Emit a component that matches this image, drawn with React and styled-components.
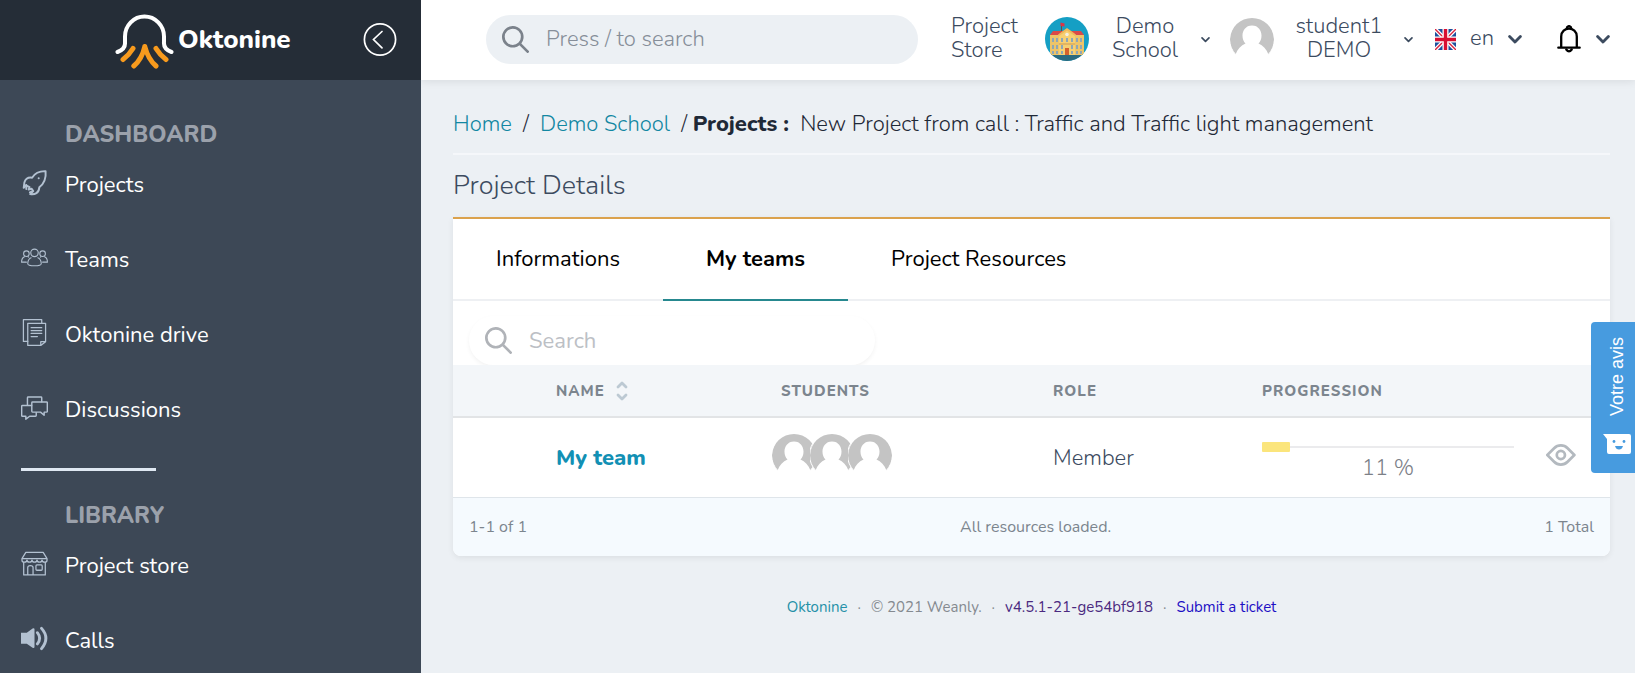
import React from "react";
import styled, { createGlobalStyle } from "styled-components";

const Global = createGlobalStyle`
  *, *::before, *::after { box-sizing: border-box; }
  body {
    margin: 0;
    background: #ecf0f4;
    color: #3c4b5f;
    font-family: Nunito, Lato, "Liberation Sans", sans-serif;
    font-size: 22px;
    line-height: 24px;
  }
  a { text-decoration: none; color: inherit; }
  button, input { font: inherit; color: inherit; border: 0; background: none; padding: 0; }
  button { cursor: pointer; }
  svg { display: block; flex: none; }
`;

const Shell = styled.div`
  display: grid;
  grid-template-columns: 421px minmax(0, 1fr);
  height: 100vh;
`;

/* Sidebar */
const Sidebar = styled.aside`
  background: #3d4856;
  overflow: hidden;
`;
const Brand = styled.div`
  display: flex;
  align-items: center;
  height: 80px;
  padding: 0 24px 0 115px;
  background: #252d37;
`;
const BrandLink = styled.a`
  display: flex;
  align-items: center;
  gap: 4px;
  color: #fff;
  font-size: 26px;
  font-weight: 800;
`;
const Collapse = styled.button`
  margin-left: auto;
`;
const NavSection = styled.nav`
  padding-top: ${(p) => p.$top}px;
`;
const NavTitle = styled.h2`
  margin: 0;
  padding-left: 65px;
  color: #9ba1ab;
  font-size: 23px;
  line-height: 24px;
  font-weight: 800;
  text-transform: uppercase;
`;
const NavLink = styled.a`
  display: flex;
  align-items: center;
  gap: 17px;
  height: 75px;
  padding-left: 21px;
  color: #fff;
  svg { color: #b3c1d1; width: 27px; height: 27px; margin-bottom: 4px; }
`;
const Divider = styled.hr`
  width: 135px;
  height: 3px;
  margin: 21px 0 0 21px;
  border: 0;
  background: #dfe8f2;
`;

/* Top bar */
const Main = styled.div`
  display: flex;
  flex-direction: column;
  min-width: 0;
  overflow-y: auto;
`;
const TopBar = styled.header`
  display: flex;
  align-items: center;
  flex: none;
  height: 80px;
  padding: 0 25px 2px 65px;
  background: #fff;
  box-shadow: 0 2px 8px rgba(0, 0, 0, 0.08);
  font-weight: 300;
`;
const SearchBox = styled.label`
  display: flex;
  align-items: center;
  gap: 17px;
  height: 49px;
  padding: 0 16px;
  border-radius: 25px;
  background: ${(p) => (p.$plain ? "#fff" : "#ecf0f4")};
  color: ${(p) => (p.$plain ? "#b0b3b8" : "#7b828b")};
  box-shadow: ${(p) => (p.$plain ? "0 2px 4px rgba(0, 0, 0, 0.05)" : "none")};
  font-weight: ${(p) => (p.$plain ? 400 : 300)};
  input { flex: 1; min-width: 0; outline: 0; }
  input::placeholder { color: ${(p) => (p.$plain ? "#bcc0c5" : "#868e99")}; opacity: 1; }
`;
const TopSearch = styled(SearchBox)`
  flex: 1;
  margin-right: 33px;
`;
const StoreLink = styled.a`
  width: 68px;
  margin: 0 26px 2px 0;
`;
const Menu = styled.button`
  display: flex;
  align-items: center;
  gap: ${(p) => p.$gap}px;
  margin-right: ${(p) => p.$after || 0}px;
  font-weight: 300;
`;
const MenuLabel = styled.span`
  width: ${(p) => p.$width}px;
  margin-bottom: 3px;
  text-align: center;
`;

/* Content */
const Content = styled.main`
  padding: 32px 25px 24px 32px;
`;
const Crumbs = styled.nav`
  display: flex;
  align-items: center;
  height: 41px;
  padding-bottom: 17px;
  color: #1f2937;
  font-weight: 300;
  white-space: pre;
  a { color: #1287a2; }
  strong { font-weight: 800; }
`;
const Rule = styled.hr`
  height: 2px;
  margin: 0;
  border: 0;
  background: #f5f7fa;
`;
const Title = styled.h1`
  margin: 0;
  padding: 15px 0;
  font-size: 27px;
  line-height: 32px;
  font-weight: 300;
`;
const Card = styled.section`
  background: #fff;
  border-top: 2px solid #dba24d;
  border-radius: 0 0 8px 8px;
  box-shadow: 0 2px 6px rgba(0, 0, 0, 0.07);
`;
const Tabs = styled.div`
  display: flex;
  height: 82px;
  border-bottom: 2px solid #eef0f3;
`;
const Tab = styled.button`
  height: 82px;
  padding: 0 43px;
  color: #000;
  font-weight: ${(p) => (p.$active ? 700 : 400)};
  border-bottom: 2px solid ${(p) => (p.$active ? "#26888f" : "transparent")};
`;
const FilterRow = styled.div`
  padding: 15px 16px 0;
`;
const FilterSearch = styled(SearchBox)`
  max-width: 406px;
`;
const Table = styled.table`
  width: 100%;
  table-layout: fixed;
  border-collapse: collapse;
`;
const Th = styled.th`
  height: 52px;
  padding: 0 16px;
  background: #f3f6f9;
  border-bottom: 2px solid #e2e4e6;
  color: #7c858e;
  font-size: 15px;
  font-weight: 800;
  letter-spacing: 1px;
  text-align: left;
  text-transform: uppercase;
`;
const SortButton = styled.button`
  display: flex;
  align-items: center;
  gap: 11px;
  font-weight: 800;
  letter-spacing: 1px;
  text-transform: uppercase;
`;
const Td = styled.td`
  height: 80px;
  padding: 0 16px;
  font-weight: 300;
`;
const TeamLink = styled.a`
  color: #1290b4;
  font-weight: 800;
`;
const AvatarStack = styled.div`
  display: flex;
  margin: 0 0 6px -9px;
  svg + svg { margin-left: -6px; }
`;
const ProgressCell = styled.div`
  padding-top: 11px;
`;
const Progress = styled.div`
  display: flex;
  align-items: center;
  height: 10px;
  background: linear-gradient(#ebebed, #ebebed) center / 100% 2px no-repeat;
`;
const ProgressFill = styled.div`
  height: 10px;
  border-radius: 1px;
  background: #fbe57c;
`;
const ProgressText = styled.div`
  height: 32px;
  line-height: 32px;
  color: #7c8087;
  text-align: center;
`;
const ViewLink = styled.a`
  display: inline-block;
  color: #b3b9bf;
`;
const Pager = styled.div`
  display: flex;
  align-items: center;
  justify-content: space-between;
  height: 59px;
  padding: 0 16px;
  border-top: 1px solid #dfe5ea;
  border-radius: 0 0 8px 8px;
  background: #f5fafe;
  color: #7c858e;
  font-size: 16px;
`;
const Footer = styled.footer`
  display: flex;
  justify-content: center;
  gap: 10px;
  padding-top: 39px;
  color: #858a90;
  font-size: 15px;
`;
const FooterLink = styled.a`
  color: ${(p) => p.$color};
`;
const Feedback = styled.button`
  position: fixed;
  right: 0;
  top: 322px;
  display: flex;
  flex-direction: column;
  align-items: center;
  gap: 18px;
  width: 44px;
  padding: 15px 0 19px 8px;
  border-radius: 4px 0 0 4px;
  background: #479bdf;
  color: #fff;
  font-family: "Liberation Sans", sans-serif;
  font-size: 18px;
  line-height: 20px;
`;
const FeedbackText = styled.span`
  writing-mode: vertical-rl;
  transform: rotate(180deg);
`;

/* Icons */
const Line = ({ w = 1, children }) => (
  <svg viewBox="0 0 28 28" fill="none" stroke="currentColor" strokeWidth={w} strokeLinecap="round" strokeLinejoin="round" aria-hidden="true">
    {children}
  </svg>
);
const Rocket = () => (
  <Line w={2}>
    <path d="M25.5 2.200C19 2 14.500 4 11.500 9 7.500 8.500 4.500 10.500 3.500 14L2.800 19.500l2.400-2.600 3.700 1.800-1 2.700 3.200-.9 1.600 2.300-3.200 3.200c5 .8 9-1 9.500-7C23.500 15.500 26.300 10.500 25.500 2.200z" />
    <path d="M18.300 9.500h.1M5.500 16.500v4.200M11.500 23.200l-2.300 1" />
  </Line>
);
const Users = () => (
  <Line w={1.100}>
    <circle cx="14" cy="9.200" r="3.900" />
    <circle cx="5.600" cy="10" r="2.900" />
    <circle cx="22.400" cy="10" r="2.900" />
    <path d="M10.500 14.200C8 15.300 7 17.300 7 20.500c0 1.200 3 2.100 7 2.100s7-.9 7-2.100c0-3.200-1-5.200-3.500-6.300" />
    <path d="M3.600 13.200C1.600 14 .6 15.500.6 18.800h5M24.400 13.200c2 .8 3 2.300 3 5.600h-5M8 13.600l-.6-.4M20 13.600l.6-.4" />
  </Line>
);
const Docs = () => (
  <Line w={1.300}>
    <path d="M7 4.500h18.500v19L20.500 27.400H7zM20.500 27.400v-3.900h5" />
    <path d="M21.500 4.300V.7H2.500v22.600H7M10.500 9h11M10.500 12h11M10.500 15h11M10.500 18.200h6.500" />
  </Line>
);
const Chats = () => (
  <Line w={1.500}>
    <path d="M12 8.200h14.500q.8 0 .8.800v9q0 .8-.8.800H24v3.300l-3.800-3.300H12q-.8 0-.8-.8V9q0-.8.800-.8z" />
    <path d="M21.500 8V4q0-.8-.8-.8H7.500q-.8 0-.8.800v8M11 12H1.500q-.8 0-.8.800v9.500q0 .8.800.8H5v3l4-3h6q.8 0 .8-.8v-3" />
  </Line>
);
const Store = () => (
  <Line w={1.300}>
    <path d="M5 2.500h18l4 6.500H1zM1 9v1.500c0 2.800 5 2.800 5.200 0 .2 2.800 5 2.800 5.200 0 .2 2.800 5 2.800 5.200 0 .2 2.800 5 2.800 5.200 0 .2 2.800 5.200 2.800 5.200 0V9M2.800 13v12.800h22.400V13M7 25.800v-7.600c0-2.700 5.500-2.700 5.500 0v7.600" />
    <rect x="15.500" y="15.500" width="6.500" height="5.500" rx="1" />
  </Line>
);
const Speaker = () => (
  <svg viewBox="0 0 28 28" fill="none" aria-hidden="true">
    <path d="M0 8h6l6-4.500q2-.8 2 1v18q0 1.800-2 1L6 19.500H0z" fill="currentColor" />
    <path d="M17 8q4.600 5.700 0 11.600M21.300 3.500q9 10 0 21" stroke="currentColor" strokeWidth="3" strokeLinecap="round" />
  </svg>
);
const SearchIcon = () => (
  <svg width="27" height="27" viewBox="0 0 20 20" fill="currentColor" aria-hidden="true">
    <path d="M14.32 12.906l5.387 5.387a1 1 0 0 1-1.414 1.414l-5.387-5.387a8 8 0 1 1 1.414-1.414zM8 14A6 6 0 1 0 8 2a6 6 0 0 0 0 12z" />
  </svg>
);
const Chevron = ({ width, stroke }) => (
  <svg width={width} height={width} viewBox="0 0 14 14" fill="none" stroke="#3c4b5f" strokeWidth={stroke} strokeLinecap="round" strokeLinejoin="round" aria-hidden="true">
    <path d="M1.600 4.500L7 10l5.400-5.500" />
  </svg>
);
const Avatar = () => (
  <svg width="44" height="44" viewBox="0 0 44 44" aria-hidden="true">
    <circle cx="22" cy="22" r="22" fill="#fff" />
    <path d="M5.500 37.500A22 22 0 1 1 38.500 37.500C36.500 32 33 28.500 28.500 26.500 34 21 32 8.500 22 8.500S10 21 15.500 26.500C11 28.500 7.500 32 5.500 37.500z" fill="#c4c4c4" />
    <circle cx="22" cy="22" r="22.500" fill="none" stroke="#fff" />
  </svg>
);
const School = () => (
  <svg width="44" height="44" viewBox="0 0 44 44" aria-hidden="true">
    <defs><clipPath id="school-disc"><circle cx="22" cy="22" r="22" /></clipPath></defs>
    <g clipPath="url(#school-disc)">
      <rect width="44" height="44" fill="#159fc4" />
      <rect y="37" width="44" height="7" fill="#2b6b80" />
      <path d="M16 6h1v10h-1z" fill="#704b45" />
      <path d="M15.500 5.500l4 1v3l-4-.5z" fill="#dc3545" />
      <path d="M5 18l3-4h28l3 4z" fill="#d94a48" />
      <path d="M5 18h34v20H5z" fill="#edc469" />
      <path d="M14 38V18l8-6 8 6v20z" fill="#f6d073" />
      <path d="M13 17.500l9-6.500 9 6.500-1 1.500-8-5.500-8 5.500z" fill="#f0b95c" />
      <circle cx="22" cy="17.500" r="1.800" fill="#f3eee1" />
      <path d="M7 21h2v4H7zM11 21h2v4h-2zM16 21h2v4h-2zM21 21h2v4h-2zM26 21h2v4h-2zM31 21h2v4h-2zM35 21h2v4h-2zM7 28h2v4H7zM11 28h2v4h-2zM16 28h2v4h-2zM26 28h2v4h-2zM31 28h2v4h-2zM35 28h2v4h-2zM7 34h2v3H7zM11 34h2v3h-2zM16 34h2v3h-2zM26 34h2v3h-2zM31 34h2v3h-2zM35 34h2v3h-2z" fill="#8fa7b5" />
      <path d="M14 26.500h16v1H14z" fill="#cf9a51" />
      <path d="M20 31h4v7h-4z" fill="#d5622d" />
    </g>
  </svg>
);
const Flag = () => (
  <svg width="21" height="21" viewBox="0 0 21 21" aria-hidden="true">
    <rect width="21" height="21" fill="#1d4f9c" />
    <path d="M0 0l21 21M21 0L0 21" stroke="#fff" strokeWidth="4" />
    <path d="M0 0l21 21M21 0L0 21" stroke="#d8223f" strokeWidth="1.400" />
    <path d="M10.500 0v21M0 10.500h21" stroke="#fff" strokeWidth="6" />
    <path d="M10.500 0v21M0 10.500h21" stroke="#d80f32" strokeWidth="3.400" />
  </svg>
);
const Bell = () => (
  <svg width="24" height="28" viewBox="0 0 24 28" fill="none" stroke="#000" strokeWidth="2.300" strokeLinecap="round" aria-hidden="true">
    <path d="M1.300 22.700h21.400M4.200 22V11.500C4.200 0.900 19.800 0.900 19.800 11.500V22" />
    <path d="M10 2.200Q12 .2 14 2.200M9.300 24.500Q12 28.400 14.700 24.500" />
  </svg>
);
const Logo = () => (
  <svg width="59" height="58" viewBox="0 0 59 58" fill="none" strokeLinecap="round" strokeWidth="5" aria-hidden="true">
    <path d="M2.500 41C8 39 10.500 36 10 31V25.500A19.500 20 0 0 1 49 25.500V31c-.5 5 2 8 7.500 10" stroke="#fff" strokeWidth="4" />
    <path d="M18 37.500Q14 44 8 48.500M41 37.500Q45 44 51 48.500M29.800 35.500Q27 48 18.800 55M29.800 35.500Q33 48 41 55" stroke="#f79a1d" />
  </svg>
);
const BackIcon = () => (
  <svg width="34" height="34" viewBox="0 0 34 34" fill="none" stroke="#fff" strokeWidth="1.700" strokeLinecap="round" aria-hidden="true">
    <circle cx="17" cy="16.500" r="15.600" />
    <path d="M19 8.500l-8.500 8L19 24.800" />
  </svg>
);
const SortIcon = () => (
  <svg width="12" height="20" viewBox="0 0 12 20" fill="none" stroke="#bcc9d3" strokeWidth="2.800" strokeLinecap="round" strokeLinejoin="round" aria-hidden="true">
    <path d="M2 6l4-4 4 4M2 14l4 4 4-4" />
  </svg>
);
const Eye = () => (
  <svg width="30" height="22" viewBox="0 0 22 16" fill="currentColor" aria-hidden="true">
    <path d="M16.56 13.66a8 8 0 0 1-11.32 0L.3 8.7a1 1 0 0 1 0-1.42l4.95-4.95a8 8 0 0 1 11.32 0l4.95 4.95a1 1 0 0 1 0 1.42l-4.95 4.95-.01.01zm-9.9-1.42a6 6 0 0 0 8.48 0L19.38 8l-4.24-4.24a6 6 0 0 0-8.48 0L2.4 8l4.25 4.24h.01zM10.900 12a4 4 0 1 1 0-8 4 4 0 0 1 0 8zm0-2a2 2 0 1 0 0-4 2 2 0 0 0 0 4z" />
  </svg>
);
const Smile = () => (
  <svg width="28" height="20" viewBox="0 0 28 20" aria-hidden="true">
    <path d="M0 0h26q2 0 2 2v16q0 2-2 2H6q-2 0-2-2V5z" fill="#fff" />
    <circle cx="11" cy="7.500" r="1.400" fill="#479bdf" />
    <circle cx="21" cy="7.500" r="1.400" fill="#479bdf" />
    <path d="M12 12h8q-1 3.500-4 3.500T12 12z" fill="#479bdf" />
  </svg>
);

const sections = [
  { title: "Dashboard", top: 43, items: [["Projects", Rocket], ["Teams", Users], ["Oktonine drive", Docs], ["Discussions", Chats]] },
  { title: "Library", top: 33, items: [["Project store", Store], ["Calls", Speaker]] },
];
const team = { name: "My team", students: 3, role: "Member", progress: 11 };

export default function App() {
  return (
    <>
      <Global />
      <Shell>
        <Sidebar>
          <Brand>
            <BrandLink href="#"><Logo />Oktonine</BrandLink>
            <Collapse aria-label="Collapse sidebar"><BackIcon /></Collapse>
          </Brand>
          {sections.map((s, i) => (
            <React.Fragment key={s.title}>
              {i > 0 && <Divider />}
              <NavSection $top={s.top}>
                <NavTitle>{s.title}</NavTitle>
                {s.items.map(([label, Icon]) => (
                  <NavLink href="#" key={label}><Icon />{label}</NavLink>
                ))}
              </NavSection>
            </React.Fragment>
          ))}
        </Sidebar>
        <Main>
          <TopBar>
            <TopSearch>
              <SearchIcon />
              <input type="search" placeholder="Press / to search" aria-label="Search everywhere" />
            </TopSearch>
            <StoreLink href="#">Project Store</StoreLink>
            <Menu $gap={20} $after={20}>
              <School />
              <MenuLabel $width={72}>Demo School</MenuLabel>
              <Chevron width={9} stroke={2.6} />
            </Menu>
            <Menu $gap={20} $after={22}>
              <Avatar />
              <MenuLabel $width={90}>student1 DEMO</MenuLabel>
              <Chevron width={9} stroke={2.6} />
            </Menu>
            <Menu $gap={14} $after={35}>
              <Flag />
              <MenuLabel $width={24}>en</MenuLabel>
              <Chevron width={14} stroke={2.8} />
            </Menu>
            <Menu $gap={15} aria-label="Notifications">
              <Bell />
              <Chevron width={14} stroke={2.8} />
            </Menu>
          </TopBar>
          <Content>
            <Crumbs aria-label="Breadcrumb">
              <a href="#">Home</a>{"  /  "}<a href="#">Demo School</a>{"  / "}<strong>Projects :</strong>
              {"  New Project from call : Traffic and Traffic light management"}
            </Crumbs>
            <Rule />
            <Title>Project Details</Title>
            <Card>
              <Tabs role="tablist">
                <Tab role="tab">Informations</Tab>
                <Tab role="tab" aria-selected="true" $active>My teams</Tab>
                <Tab role="tab">Project Resources</Tab>
              </Tabs>
              <FilterRow>
                <FilterSearch $plain>
                  <SearchIcon />
                  <input type="search" placeholder="Search" aria-label="Search teams" />
                </FilterSearch>
              </FilterRow>
              <Table>
                <colgroup>
                  <col width="87" /><col width="225" /><col width="272" />
                  <col width="209" /><col width="284" /><col width="80" />
                </colgroup>
                <thead>
                  <tr>
                    <Th />
                    <Th><SortButton>Name<SortIcon /></SortButton></Th>
                    <Th>Students</Th>
                    <Th>Role</Th>
                    <Th>Progression</Th>
                    <Th />
                  </tr>
                </thead>
                <tbody>
                  <tr>
                    <Td />
                    <Td><TeamLink href="#">{team.name}</TeamLink></Td>
                    <Td>
                      <AvatarStack>
                        {Array.from({ length: team.students }, (_, i) => <Avatar key={i} />)}
                      </AvatarStack>
                    </Td>
                    <Td>{team.role}</Td>
                    <Td>
                      <ProgressCell>
                        <Progress role="progressbar" aria-label="Progression" aria-valuenow={team.progress}>
                          <ProgressFill style={{ width: `${team.progress}%` }} />
                        </Progress>
                        <ProgressText>{team.progress} %</ProgressText>
                      </ProgressCell>
                    </Td>
                    <Td><ViewLink href="#" aria-label="View team"><Eye /></ViewLink></Td>
                  </tr>
                </tbody>
              </Table>
              <Pager>
                <span>1-1 of 1</span>
                <span>All resources loaded.</span>
                <span>1 Total</span>
              </Pager>
            </Card>
            <Footer>
              <FooterLink href="#" $color="#2590a8">Oktonine</FooterLink>
              <span>·</span>
              <span>© 2021 Weanly.</span>
              <span>·</span>
              <FooterLink href="#" $color="#4b2a80">v4.5.1-21-ge54bf918</FooterLink>
              <span>·</span>
              <FooterLink href="#" $color="#1d0fc4">Submit a ticket</FooterLink>
            </Footer>
          </Content>
        </Main>
      </Shell>
      <Feedback>
        <FeedbackText>Votre avis</FeedbackText>
        <Smile />
      </Feedback>
    </>
  );
}
